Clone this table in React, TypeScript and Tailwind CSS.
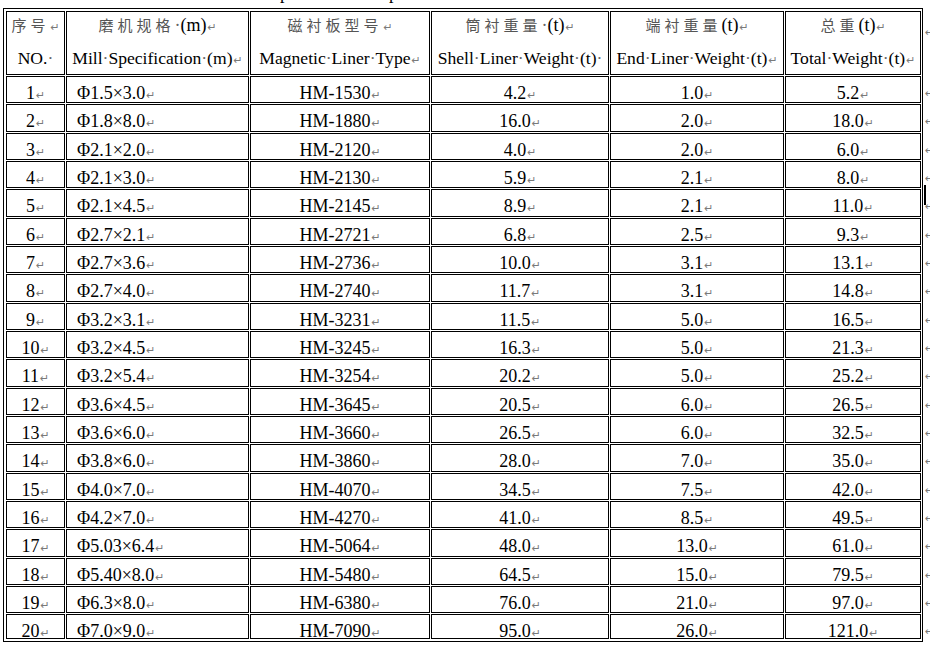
import React from "react";

type Row = [string, string, string, string, string, string];

const rows: Row[] = [
  ["1", "Φ1.5×3.0", "HM-1530", "4.2", "1.0", "5.2"],
  ["2", "Φ1.8×8.0", "HM-1880", "16.0", "2.0", "18.0"],
  ["3", "Φ2.1×2.0", "HM-2120", "4.0", "2.0", "6.0"],
  ["4", "Φ2.1×3.0", "HM-2130", "5.9", "2.1", "8.0"],
  ["5", "Φ2.1×4.5", "HM-2145", "8.9", "2.1", "11.0"],
  ["6", "Φ2.7×2.1", "HM-2721", "6.8", "2.5", "9.3"],
  ["7", "Φ2.7×3.6", "HM-2736", "10.0", "3.1", "13.1"],
  ["8", "Φ2.7×4.0", "HM-2740", "11.7", "3.1", "14.8"],
  ["9", "Φ3.2×3.1", "HM-3231", "11.5", "5.0", "16.5"],
  ["10", "Φ3.2×4.5", "HM-3245", "16.3", "5.0", "21.3"],
  ["11", "Φ3.2×5.4", "HM-3254", "20.2", "5.0", "25.2"],
  ["12", "Φ3.6×4.5", "HM-3645", "20.5", "6.0", "26.5"],
  ["13", "Φ3.6×6.0", "HM-3660", "26.5", "6.0", "32.5"],
  ["14", "Φ3.8×6.0", "HM-3860", "28.0", "7.0", "35.0"],
  ["15", "Φ4.0×7.0", "HM-4070", "34.5", "7.5", "42.0"],
  ["16", "Φ4.2×7.0", "HM-4270", "41.0", "8.5", "49.5"],
  ["17", "Φ5.03×6.4", "HM-5064", "48.0", "13.0", "61.0"],
  ["18", "Φ5.40×8.0", "HM-5480", "64.5", "15.0", "79.5"],
  ["19", "Φ6.3×8.0", "HM-6380", "76.0", "21.0", "97.0"],
  ["20", "Φ7.0×9.0", "HM-7090", "95.0", "26.0", "121.0"],
];

const Ret = () => (
  <span className="font-['DejaVu_Sans',sans-serif] text-[11px] text-[#7a7a7a] ml-px">↵</span>
);

function Txt({ s }: { s: string }) {
  const parts: React.ReactNode[] = [];
  let buf = "";
  let k = 0;
  const flush = () => {
    if (buf) {
      parts.push(<span key={k++}>{buf}</span>);
      buf = "";
    }
  };
  for (const ch of s) {
    if (ch === "·") {
      flush();
      parts.push(
        <span key={k++} className="text-[#666]">
          ·
        </span>
      );
    } else if (ch === "↵") {
      flush();
      parts.push(<Ret key={k++} />);
    } else {
      buf += ch;
    }
  }
  flush();
  return <>{parts}</>;
}

const Cjk = ({ s }: { s: string }) => (
  <span className="font-['Noto_Sans_CJK_SC',sans-serif] text-[15px] tracking-[4px] text-[#555]">{s}</span>
);

const headers: { cn: string; cnRest: string; en: string }[] = [
  { cn: "序号", cnRest: "↵", en: "NO.·" },
  { cn: "磨机规格", cnRest: "·(m)↵", en: "Mill·Specification·(m)↵" },
  { cn: "磁衬板型号", cnRest: "↵", en: "Magnetic·Liner·Type↵" },
  { cn: "筒衬重量", cnRest: "·(t)↵", en: "Shell·Liner·Weight·(t)·" },
  { cn: "端衬重量", cnRest: "(t)↵", en: "End·Liner·Weight·(t)↵" },
  { cn: "总重", cnRest: "(t)↵", en: "Total·Weight·(t)↵" },
];

const rowsTemplate = "grid-rows-[64px_repeat(19,27.33px)_25px]";

export default function App() {
  return (
    <div className="w-[930px] h-[647px] overflow-hidden bg-white text-black font-['Liberation_Serif','Noto_Sans_CJK_SC',serif] text-[18px]">
      {/* clipped line of text above the table */}
      <div className="h-[8px] overflow-hidden">
        <div className="flex mt-[-17px] leading-[20px]">
          <span className="ml-[280px]">p</span>
          <span className="ml-[100px]">p</span>
        </div>
      </div>
      <div className="flex items-start ml-[3px]">
        <div className="border border-black pt-[2px] pl-[2px] pr-px pb-[2px]">
          <div className={`grid grid-cols-[59px_183px_180px_178px_174px_136px] ${rowsTemplate} gap-px`}>
            {headers.map((h, i) => (
              <div
                key={"h" + i}
                className="border border-black flex flex-col items-center leading-[31px] whitespace-nowrap overflow-hidden"
              >
                <div className="mt-[-3px]">
                  <Cjk s={h.cn} />
                  <Txt s={h.cnRest} />
                </div>
                <div className="text-[17.6px]">
                  <Txt s={h.en} />
                </div>
              </div>
            ))}
            {rows.map((r, ri) =>
              r.map((c, ci) => (
                <div
                  key={ri + "-" + ci}
                  className={`border border-black pt-[6px] leading-[20px] whitespace-nowrap ${
                    ci === 1 ? "pl-[10px] text-left" : "text-center"
                  }`}
                >
                  {c}
                  <Ret />
                </div>
              ))
            )}
          </div>
        </div>
        <div className="relative pt-[3px] pl-px">
          <div className={`grid ${rowsTemplate} gap-px`}>
            <div className="pt-[12px] leading-[14px]">
              <Ret />
            </div>
            {rows.map((_, i) => (
              <div key={"m" + i} className="pt-[8px] leading-[14px]">
                <Ret />
              </div>
            ))}
          </div>
          <div className="absolute left-[1px] top-[177px] w-[2px] h-[20px] bg-black" />
        </div>
      </div>
    </div>
  );
}
